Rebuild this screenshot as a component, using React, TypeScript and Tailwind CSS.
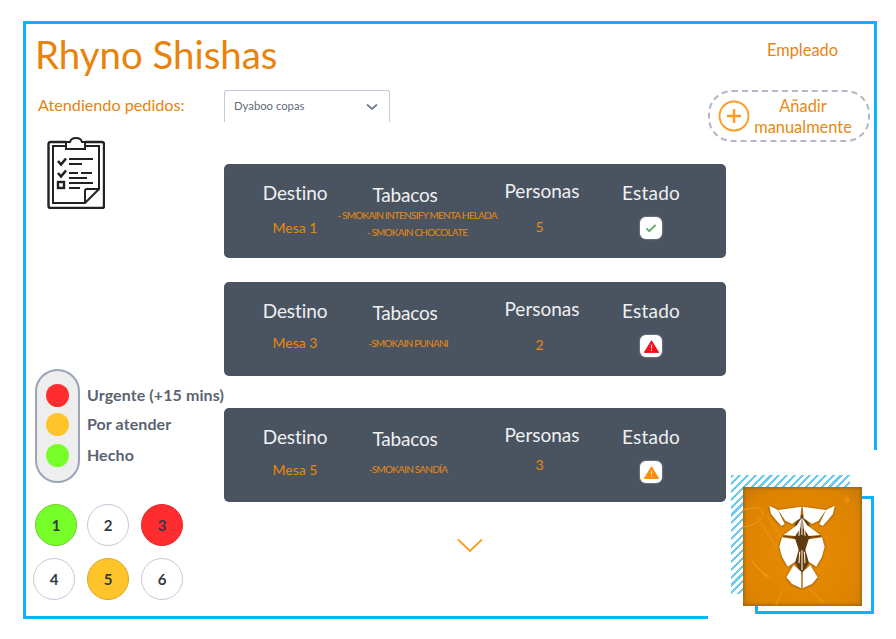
import React from "react";

type Status = "done" | "urgent" | "pending";

function StatusIcon({ status }: { status: Status }) {
  return (
    <div className="flex h-[22px] w-[22px] items-center justify-center rounded-[6px] bg-white shadow-[0_0_2px_rgba(255,255,255,0.6)]">
      {status === "done" ? (
        <svg width="12" height="10" viewBox="0 0 14 12" fill="none">
          <path d="M1.5 6.5 L5 9.8 L12.5 2.2" stroke="#5fa85a" strokeWidth="2.2" />
        </svg>
      ) : (
        <svg width="15" height="13" viewBox="0 0 15 13">
          <path
            d="M7.5 0.8 L14.6 12.4 L0.4 12.4 Z"
            fill={status === "urgent" ? "#f5101c" : "#ff8a0a"}
            stroke={status === "urgent" ? "#f5101c" : "#ff8a0a"}
            strokeLinejoin="round"
          />
          <rect x="6.9" y="4.6" width="1.2" height="3.8" fill="#fff" fillOpacity="0.8" />
          <rect x="6.9" y="9.6" width="1.2" height="1.3" fill="#fff" fillOpacity="0.8" />
        </svg>
      )}
    </div>
  );
}

function Heading({ children, className }: { children: React.ReactNode; className: string }) {
  return <div className={"whitespace-nowrap text-[19px] leading-[24px] text-[#eef0f2] " + className}>{children}</div>;
}

function OrderCard({
  table,
  tobaccos,
  people,
  status,
  tobaccoClass,
  tableClass,
  peopleClass,
}: {
  table: string;
  tobaccos: string[];
  people: string;
  status: Status;
  tobaccoClass: string;
  tableClass: string;
  peopleClass: string;
}) {
  return (
    <div className="relative z-10 flex h-[94px] w-[502px] rounded-[5px] bg-[#4a5360]">
      <div className="flex w-[142px] flex-col items-center">
        <Heading className="mt-[17px] tracking-[-0.1px]">Destino</Heading>
        <div className={"whitespace-nowrap text-[14px] leading-[18px] text-[#e8890f] " + tableClass}>{table}</div>
      </div>
      <div className="flex w-[78px] flex-col items-center">
        <Heading className="mt-[19px] tracking-[-0.2px]">Tabacos</Heading>
        <div className={"flex flex-col items-center " + tobaccoClass}>
          {tobaccos.map((t) => (
            <div key={t} className="whitespace-nowrap text-[10px] leading-[17px] tracking-[-0.76px] text-[#e8890f]">
              {t}
            </div>
          ))}
        </div>
      </div>
      <div className="ml-[58px] flex w-[78px] flex-col items-center">
        <Heading className="mt-[15px] ml-[2px]">Personas</Heading>
        <div className={"ml-[-3px] text-[14px] leading-[18px] text-[#e8890f] " + peopleClass}>{people}</div>
      </div>
      <div className="ml-[40px] flex w-[62px] flex-col items-center">
        <Heading className="mt-[17px] tracking-[0.2px]">Estado</Heading>
        <div className="mt-[12px]">
          <StatusIcon status={status} />
        </div>
      </div>
    </div>
  );
}

function Clipboard() {
  return (
    <svg width="58" height="72" viewBox="0 0 58 72" fill="none" stroke="#222222" strokeWidth="2">
      <path d="M19 5 H3.5 Q1.5 5 1.5 7 V69 Q1.5 71 3.5 71 H55 Q57 71 57 69 V7 Q57 5 55 5 H38" strokeWidth="2.4" />
      <path d="M19 9 H6 V66 H38 L52 52 V9 H38" />
      <path d="M19 12 V5 H23 Q24 1 29 1 Q34 1 35 5 H38 V12 Z" fill="#fff" />
      <path d="M52 52 H40 Q38 52 38 54 V66" />
      <path d="M11 24 L14 27.5 L19 21.5" strokeWidth="2.6" />
      <path d="M11 36 L14 39.5 L19 33.5" strokeWidth="2.6" />
      <rect x="11" y="45" width="6" height="6" strokeWidth="2.4" />
      <path d="M22 22 H46 M22 27 H35 M22 36 H31 M34 36 H45 M22 41 H40 M22 46 H46 M22 51 H33" strokeWidth="2" />
    </svg>
  );
}

function RhinoHalf() {
  return (
    <g>
      <polygon points="27,32 53,45 73,87 63,93 45,73 32,57" fill="#fff" />
      <polygon points="53,45 123,35 120,70 95,87 75,77" fill="#fff" />
      <polygon points="70,120 110,90 123,70 120,100 105,123" fill="#fff" />
      <polygon points="65,127 105,133 115,165 105,200 82,215 65,185 57,155" fill="#fff" />
      <polygon points="100,210 123,230 123,280 95,267 78,247" fill="#fff" />
      <path d="M68 123 L106 127" fill="none" stroke="#6b3d08" strokeWidth="3" />
    </g>
  );
}

function Logo() {
  return (
    <div className="absolute left-[708px] top-[450px] h-[189px] w-[188px] bg-white">
      <div className="absolute left-[47px] top-[46px] h-[118px] w-[119px] border-[3px] border-[#0db2ff]" />
      <div className="absolute left-[23px] top-[25px] h-[119px] w-[119px] bg-[repeating-linear-gradient(135deg,#6ccbee_0,#6ccbee_2.2px,#ffffff_2.2px,#ffffff_5.5px)]" />
      <div className="absolute left-[35px] top-[37px] h-[119px] w-[119px] overflow-hidden bg-[radial-gradient(circle_at_50%_55%,#e98c04,#dd8300_75%,#c97a08)] shadow-[inset_0_0_4px_#7a5218]">
        <svg width="119" height="119" viewBox="0 0 119 119" fill="none">
          <path d="M0 23 Q20 17 20 27 Q18 38 0 40" stroke="#eb9a20" strokeWidth="1" />
          <path d="M9 74 Q18 86 26 90" stroke="#f0a01c" strokeWidth="1.2" />
          <path d="M14 30 L40 70 M24 28 L48 66 M60 96 L80 115 M40 100 L33 118" stroke="#e4900e" strokeWidth="2" />
          <circle cx="104" cy="13" r="3" fill="#e4900e" />
        </svg>
        <svg className="absolute left-[17px] top-[8px]" width="84" height="100" viewBox="0 0 250 300">
          <g className="drop-shadow-[0_1px_3px_rgba(80,40,0,0.7)]">
            <polygon points="125,58 146,88 150,125 135,160 146,200 125,238 104,200 115,160 100,125 104,88" fill="#5f3a10" />
            <path d="M118 92 L116 122 M132 92 L134 122 M125 70 L125 120 M118 170 L116 205 M132 170 L134 205 M125 165 L125 225" stroke="#f5e6d0" strokeWidth="3.5" fill="none" />
            <RhinoHalf />
            <g transform="translate(250 0) scale(-1 1)">
              <RhinoHalf />
            </g>
          </g>
        </svg>
      </div>
    </div>
  );
}

const legend = [
  { label: "Urgente (+15 mins)", dot: "bg-[#ff2d30]", row: "h-[29px]" },
  { label: "Por atender", dot: "bg-[#ffc429]", row: "h-[31px]" },
  { label: "Hecho", dot: "bg-[#76ff29]", row: "h-[31px]" },
];

function Table({ n, className }: { n: number; className: string }) {
  return (
    <div className={"flex h-[42px] w-[42px] items-center justify-center rounded-full border text-[15px] font-bold text-[#333a44] " + className}>
      {n}
    </div>
  );
}

export default function App() {
  return (
    <div className="relative h-[639px] w-[896px] overflow-hidden bg-white pl-[23px] pt-[21px] [font-family:Lato,sans-serif]">
      <div className="h-[598px] w-[854px] border-[3px] border-[#0db2ff]">
        <div className="flex h-[66px] items-start justify-between">
          <div className="ml-[9px] mt-[6px] text-[38.4px] leading-[48px] text-[#e8830c]">Rhyno Shishas</div>
          <div className="mr-[36px] mt-[16px] text-[16.4px] leading-[20px] text-[#e8830c]">Empleado</div>
        </div>
        <div className="flex">
          <div className="w-[198px] shrink-0">
            <div className="ml-[12px] flex h-[30px] items-center text-[16.2px] text-[#e8830c]">Atendiendo pedidos:</div>
            <div className="ml-[21px] mt-[17px]">
              <Clipboard />
            </div>
            <div className="ml-[9px] mt-[160px] flex">
              <div className="flex h-[114px] w-[46px] flex-col items-center rounded-[23px] border-2 border-[#9aa5b8] bg-[#eeeeee] pt-[13px]">
                <div className={"h-[23px] w-[23px] rounded-full " + legend[0].dot} />
                <div className={"mt-[6px] h-[23px] w-[23px] rounded-full " + legend[1].dot} />
                <div className={"mt-[8px] h-[23px] w-[23px] rounded-full " + legend[2].dot} />
              </div>
              <div className="ml-[7px] whitespace-nowrap pt-[11px] text-[16px] font-bold leading-[29px] tracking-[0.1px] text-[#5a6371]">
                {legend.map((l) => (
                  <div key={l.label} className={l.row}>
                    {l.label}
                  </div>
                ))}
              </div>
            </div>
            <div className="ml-[9px] mt-[21px] flex gap-[10px]">
              <Table n={1} className="border-[#6fd02a] bg-[#76ff29]" />
              <Table n={2} className="border-[#c3cad8] bg-white" />
              <div className="ml-[2px]">
                <Table n={3} className="border-[#e02a2d] bg-[#ff2d30]" />
              </div>
            </div>
            <div className="ml-[7px] mt-[12px] flex gap-[12px]">
              <Table n={4} className="border-[#c3cad8] bg-white" />
              <Table n={5} className="border-[#d9a828] bg-[#ffc429]" />
              <Table n={6} className="border-[#c3cad8] bg-white" />
            </div>
          </div>
          <div className="w-[502px] shrink-0">
            <div className="flex h-[32px] w-[166px] items-center justify-between rounded-t-[3px] border border-b-0 border-[#c5cbdb] pl-[9px] pr-[11px]">
              <span className="text-[11.3px] text-[#5f6b7a]">Dyaboo copas</span>
              <svg width="12" height="8" viewBox="0 0 12 8" fill="none">
                <path d="M1 1.5 L6 6 L11 1.5" stroke="#77808e" strokeWidth="1.8" />
              </svg>
            </div>
            <div className="mt-[42px]">
              <OrderCard
                table="Mesa 1"
                tobaccos={["- SMOKAIN INTENSIFY MENTA HELADA", "- SMOKAIN CHOCOLATE"]}
                people="5"
                status="done"
                tableClass="mt-[14px]"
                tobaccoClass="ml-[24px] mt-[0px]"
                peopleClass="mt-[15px]"
              />
            </div>
            <div className="mt-[24px]">
              <OrderCard
                table="Mesa 3"
                tobaccos={["-SMOKAIN PUNANI"]}
                people="2"
                status="urgent"
                tableClass="mt-[11px]"
                tobaccoClass="ml-[6px] mt-[10px]"
                peopleClass="mt-[15px]"
              />
            </div>
            <div className="mt-[32px]">
              <OrderCard
                table="Mesa 5"
                tobaccos={["-SMOKAIN SANDÍA"]}
                people="3"
                status="pending"
                tableClass="mt-[12px]"
                tobaccoClass="ml-[6px] mt-[10px]"
                peopleClass="mt-[9px]"
              />
            </div>
            <div className="mt-[36px] flex justify-center">
              <svg className="ml-[-10px]" width="26" height="15" viewBox="0 0 26 15" fill="none">
                <path d="M1 1.5 L13 13 L25 1.5" stroke="#ff9a1f" strokeWidth="1.8" />
              </svg>
            </div>
          </div>
          <div className="relative z-20 ml-[-18px]">
            <div className="flex h-[52px] w-[162px] items-center rounded-[24px] border-2 border-dashed border-[#b0b8c8] bg-white pl-[8px]">
              <svg width="32" height="32" viewBox="0 0 32 32" fill="none" stroke="#ff9a1f">
                <circle cx="16" cy="16" r="14.5" strokeWidth="1.8" />
                <path d="M16 9 V23 M9 16 H23" strokeWidth="2.4" />
              </svg>
              <div className="ml-[2px] w-[102px] whitespace-nowrap text-center text-[16.4px] leading-[21px] text-[#e8890f]">
                Añadir
                <br />
                manualmente
              </div>
            </div>
          </div>
        </div>
      </div>
      <Logo />
    </div>
  );
}
